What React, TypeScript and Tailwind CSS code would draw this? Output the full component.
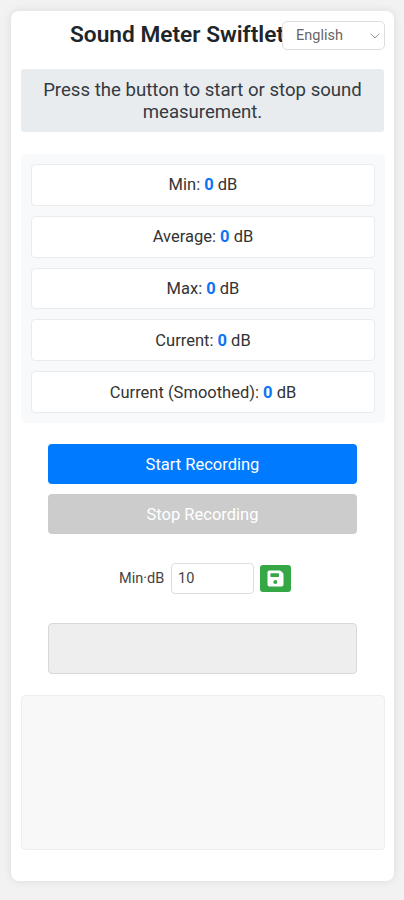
import { useState } from 'react';
import { ChevronDown } from 'lucide-react';

const READINGS = ['Min', 'Average', 'Max', 'Current', 'Current (Smoothed)'];

function SaveIcon() {
  return (
    <svg viewBox="0 0 17 17" className="h-[17px] w-[17px]" fill="currentColor" fillRule="evenodd">
      <path d="M2.4 0.5h10.1a2 2 0 0 1 1.4.6l2 2a2 2 0 0 1 .6 1.4v10.1a1.9 1.9 0 0 1-1.9 1.9H2.4a1.9 1.9 0 0 1-1.9-1.9V2.4A1.9 1.9 0 0 1 2.4.5ZM4 3.3a.6.6 0 0 0-.6.6v2.4a.6.6 0 0 0 .6.6h7.4a.6.6 0 0 0 .6-.6V3.9a.6.6 0 0 0-.6-.6H4ZM8.3 10a2 2 0 1 0 0 4 2 2 0 0 0 0-4Z" />
    </svg>
  );
}

function Header() {
  return (
    <div className="relative h-[58px]">
      <h1 className="pt-[9px] pl-[49px] text-[22.7px] leading-[30px] font-semibold whitespace-nowrap text-[#212529]">
        Sound Meter Swiftlet
      </h1>
      <button className="absolute top-[10px] right-[-1px] flex h-[29px] w-[103px] items-center justify-between rounded-[5px] border border-[#dddddd] bg-white pr-px pl-[13px] text-[14.5px] text-[#666666]">
        English
        <ChevronDown className="size-4 text-[#999999]" strokeWidth={1.5} />
      </button>
    </div>
  );
}

function Reading({ label, value }: { label: string; value: number }) {
  return (
    <div className="flex h-[42px] items-center justify-center rounded-[4px] border border-[#e9ecef] bg-white pt-[1.8px] text-[16.5px] text-[#333333]">
      <span>
        {label}: <span className="font-bold text-[#0d73f5]">{value}</span> dB
      </span>
    </div>
  );
}

export default function App() {
  const [recording, setRecording] = useState(false);
  const [minDb, setMinDb] = useState('10');

  return (
    <div className="h-[900px] w-[404px] bg-[#f2f2f2] pt-[11px] pl-[11px] font-['Roboto',sans-serif]">
      <div className="h-[870px] w-[383px] rounded-[8px] bg-white px-[10px] shadow-[0_0_10px_rgba(0,0,0,0.1)]">
        <Header />
        <p className="flex h-[63px] items-center justify-center rounded-[3px] bg-[#e9ecef] px-3 text-center text-[18.6px] leading-[22px] text-[#343a40]">
          Press the button to start or stop sound measurement.
        </p>

        {/* Readings */}
        <div className="mt-[22px] -mr-px flex h-[269px] flex-col gap-[10px] rounded-[5px] bg-[#f8f9fa] p-[10px]">
          {READINGS.map((label) => (
            <Reading key={label} label={label} value={0} />
          ))}
        </div>

        <div className="mx-[27px] mt-[21px] flex flex-col gap-[10px] text-[16.5px] text-white">
          <button
            disabled={recording}
            onClick={() => setRecording(true)}
            className="h-10 rounded-[4px] bg-[#007bff] pt-[2px] disabled:bg-[#cccccc]"
          >
            Start Recording
          </button>
          <button
            disabled={!recording}
            onClick={() => setRecording(false)}
            className="h-10 rounded-[4px] bg-[#007bff] pt-[2px] disabled:bg-[#cccccc]"
          >
            Stop Recording
          </button>
        </div>

        {/* Threshold */}
        <div className="mt-[29px] flex h-[31px] items-center pl-[98px] text-[14.5px] text-[#444444]">
          <label htmlFor="min-db" className="w-[52px] whitespace-nowrap">
            Min·dB
          </label>
          <input
            id="min-db"
            value={minDb}
            onChange={(e) => setMinDb(e.target.value)}
            className="h-[31px] w-[83px] rounded-[4px] border border-[#dddddd] bg-white px-[6px]"
          />
          <button className="ml-[6px] flex h-[27px] w-[31px] items-center justify-center rounded-[3px] bg-[#36a745] text-white">
            <SaveIcon />
          </button>
        </div>

        <div className="mx-[27px] mt-[29px] h-[51px] rounded-[4px] border border-[#d8d8d8] bg-[#eeeeee]" />
        <div className="mt-[21px] -mr-px h-[155px] rounded-[4px] border border-[#eeeeee] bg-[#f8f8f8]" />
      </div>
    </div>
  );
}
